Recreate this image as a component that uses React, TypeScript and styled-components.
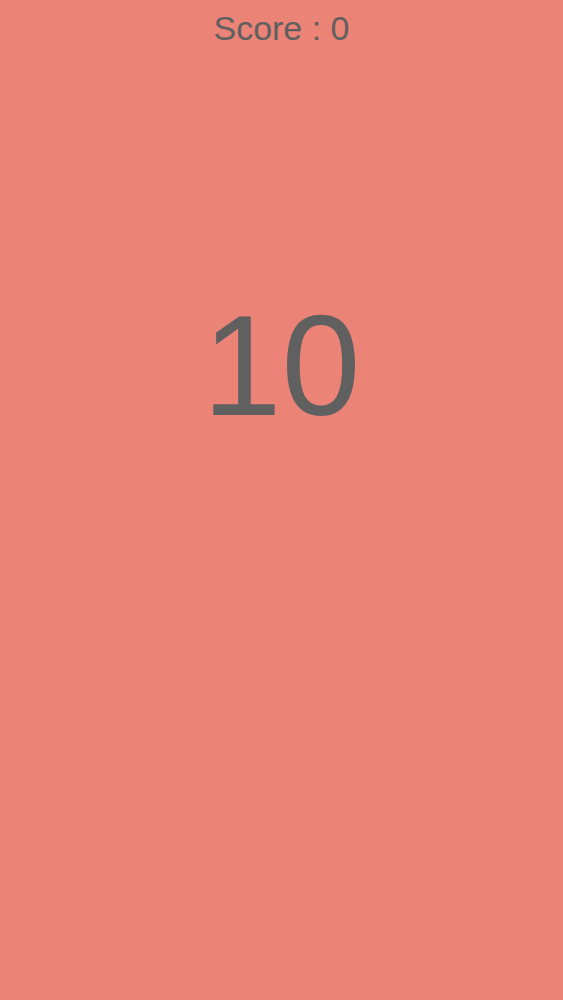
import React from "react";
import styled, { createGlobalStyle } from "styled-components";

const Global = createGlobalStyle`
  html, body {
    margin: 0;
    padding: 0;
    background: #eb8377;
  }
  #root { min-height: 100vh; }
`;

const Screen = styled.div`
  width: 563px;
  height: 1000px;
  background: #eb8377;
  display: flex;
  flex-direction: column;
  align-items: center;
  font-family: "Liberation Sans", Arial, sans-serif;
  color: #606060;
  overflow: hidden;
`;

const Score = styled.div`
  margin-top: 8px;
  font-size: 34px;
  line-height: 40px;
  white-space: pre;
`;

const Count = styled.div`
  margin-top: 247px;
  font-size: 142px;
  line-height: 142px;
`;

export default function App() {
  return (
    <>
      <Global />
      <Screen>
        <Score>Score : 0</Score>
        <Count>10</Count>
      </Screen>
    </>
  );
}
